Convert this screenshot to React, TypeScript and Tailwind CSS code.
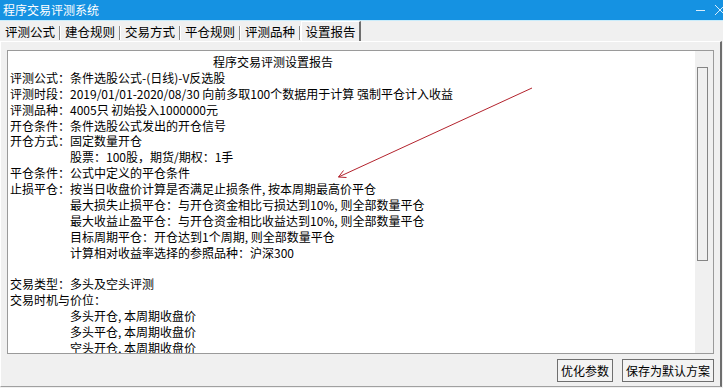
import { Fragment } from 'react';

const tabs = ['评测公式', '建仓规则', '交易方式', '平仓规则', '评测品种'];

type Line = { text: string; indent?: boolean };

const reportLines: Line[] = [
  { text: '评测公式：条件选股公式-(日线)-V反选股' },
  { text: '评测时段：2019/01/01-2020/08/30 向前多取100个数据用于计算 强制平仓计入收益' },
  { text: '评测品种：4005只 初始投入1000000元' },
  { text: '开仓条件：条件选股公式发出的开仓信号' },
  { text: '开仓方式：固定数量开仓' },
  { text: '股票：100股，期货/期权：1手', indent: true },
  { text: '平仓条件：公式中定义的平仓条件' },
  { text: '止损平仓：按当日收盘价计算是否满足止损条件, 按本周期最高价平仓' },
  { text: '最大损失止损平仓：与开仓资金相比亏损达到10%, 则全部数量平仓', indent: true },
  { text: '最大收益止盈平仓：与开仓资金相比收益达到10%, 则全部数量平仓', indent: true },
  { text: '目标周期平仓：开仓达到1个周期, 则全部数量平仓', indent: true },
  { text: '计算相对收益率选择的参照品种：沪深300', indent: true },
  { text: '' },
  { text: '交易类型：多头及空头评测' },
  { text: '交易时机与价位：' },
  { text: '多头开仓, 本周期收盘价', indent: true },
  { text: '多头平仓, 本周期收盘价', indent: true },
  { text: '空头开仓, 本周期收盘价', indent: true },
];

function TitleBar() {
  return (
    <div className="flex h-[20px] items-center justify-between bg-[#1592e2] pl-[3px] text-[12px] text-white">
      <span className="leading-none">程序交易评测系统</span>
      <svg width="32" height="14" viewBox="0 0 32 14" className="mr-[-2px]">
        <line x1="3" y1="7.5" x2="12" y2="7.5" stroke="#d8ecfb" strokeWidth="1" />
        <line x1="22" y1="2" x2="32" y2="12" stroke="#d8ecfb" strokeWidth="1" />
        <line x1="32" y1="2" x2="22" y2="12" stroke="#d8ecfb" strokeWidth="1" />
      </svg>
    </div>
  );
}

function TabStrip() {
  return (
    <div className="flex h-[21px] items-end border-t border-[#c9ecfb] pl-[1px] text-[12.5px] text-black">
      {tabs.map((t) => (
        <Fragment key={t}>
          <div className="flex h-[19px] w-[58px] items-center justify-center pt-[2px]">{t}</div>
          <div className="mb-[1px] h-[14px] w-[2px] border-l border-r border-l-[#8a8a8a] border-r-white" />
        </Fragment>
      ))}
      <div className="flex h-[20px] w-[60px] items-center justify-center border-l border-t border-r-2 border-l-white border-t-white border-r-[#6e6e6e] pt-[2px]">
        设置报告
      </div>
    </div>
  );
}

function ReportBox() {
  return (
    <div className="ml-[6px] mt-[8px] flex h-[304px] w-[707px] border border-[#9a9a9a] bg-white">
      <div className="flex-1 overflow-hidden pl-[2px] pt-[3px] text-[12px] leading-[15.9px] text-black">
        <div className="h-[15.9px] whitespace-pre pl-[203px]">程序交易评测设置报告</div>
        {reportLines.map((l, i) => (
          <div key={i} className={`h-[15.9px] whitespace-pre ${l.indent ? 'pl-[60px]' : ''}`}>
            {l.text}
          </div>
        ))}
      </div>
      <div className="w-[18px] bg-[#f0f0f0] pl-[2px] pt-[16px]">
        <div className="h-[194px] w-[11px] border border-[#858585] bg-[#f0f0f0]" />
      </div>
    </div>
  );
}

function Arrow() {
  return (
    <svg className="pointer-events-none absolute left-0 top-0" width="723" height="388">
      <g stroke="#b3232d" strokeWidth="1" fill="none">
        <line x1="532" y1="88" x2="338.5" y2="177" />
        <line x1="338.5" y1="177" x2="346.5" y2="177.5" />
        <line x1="338.5" y1="177" x2="343.5" y2="170.5" />
      </g>
    </svg>
  );
}

export default function App() {
  return (
    <div className="relative h-[388px] w-[723px] overflow-hidden bg-[#f0f0f0] font-['Noto_Sans_CJK_SC',sans-serif]">
      <TitleBar />
      <TabStrip />
      <div className="h-[346px] w-[722px] border-t border-r-2 border-b border-l border-t-white border-l-white border-r-[#6e6e6e] border-b-[#a0a0a0]">
        <ReportBox />
        <div className="mr-[6px] mt-[5px] flex justify-end gap-[9px] text-[12px] text-black">
          <button className="h-[23px] w-[56px] border border-[#6f6f6f] bg-[#f3f3f3] leading-none">优化参数</button>
          <button className="h-[23px] w-[92px] border border-[#6f6f6f] bg-[#f3f3f3] leading-none">保存为默认方案</button>
        </div>
      </div>
      <Arrow />
    </div>
  );
}
